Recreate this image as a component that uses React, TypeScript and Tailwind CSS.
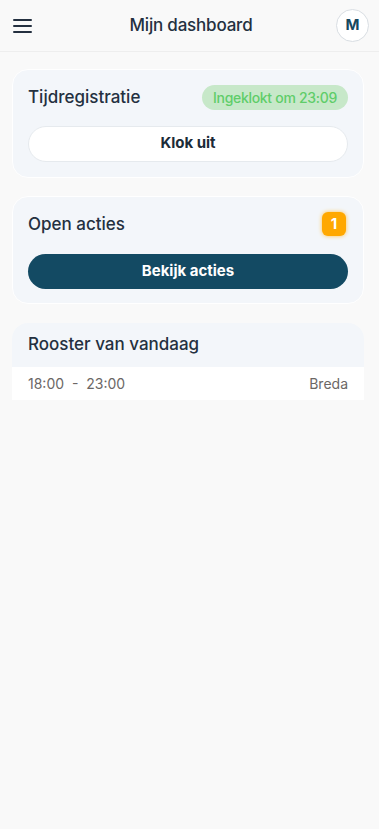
export default function App() {
  return (
    <main className="min-h-screen bg-[#f9f9f9] font-['Inter',sans-serif] text-[#243040]">
      <header className="grid h-[52px] grid-cols-[1fr_auto_1fr] items-center border-b border-[#eeeeee] bg-[#f9f9f9] pl-[13px] pr-[10px]">
        <svg width="20" height="16" viewBox="0 0 20 16" className="text-[#243040]">
          <rect x="0" y="1" width="19" height="2" rx="1" fill="currentColor" />
          <rect x="0" y="7" width="19" height="2" rx="1" fill="currentColor" />
          <rect x="0" y="13" width="19" height="2" rx="1" fill="currentColor" />
        </svg>
        <h1 className="text-[17px] font-medium tracking-[-0.2px] text-[#243040]">Mijn dashboard</h1>
        <div className="flex h-[33px] w-[33px] items-center justify-center justify-self-end rounded-full border border-[#d9dee3] bg-white text-[15px] font-bold text-[#16485f]">
          M
        </div>
      </header>

      <div className="flex flex-col gap-[18px] pl-3 pr-[15px] pt-[17px]">
        <section className="rounded-2xl border border-white bg-[#f3f6fa] px-[15px] pb-[15px] pt-[15px]">
          <div className="flex items-center justify-between">
            <h2 className="text-[17px] font-medium text-[#243040]">Tijdregistratie</h2>
            <span className="flex h-[25px] items-center rounded-full bg-[#c7e8c9] px-[11px] text-[14px] font-medium tracking-[-0.3px] text-[#5fcd69]">
              Ingeklokt om 23:09
            </span>
          </div>
          <button className="mt-[15px] h-[36px] w-full rounded-full border border-[#e6eaee] bg-white text-[15px] font-bold text-[#1b2b37]">
            Klok uit
          </button>
        </section>

        <section className="rounded-2xl border border-white bg-[#f3f6fa] px-[15px] pb-[14px] pt-[15px]">
          <div className="flex items-center justify-between">
            <h2 className="text-[17px] font-medium text-[#243040]">Open acties</h2>
            <span className="mr-[2px] flex h-[24px] w-[24px] items-center justify-center rounded-md bg-[#ffa800] text-[15px] font-bold text-white shadow-[0_0_4px_#ffc24d]">
              1
            </span>
          </div>
          <button className="mt-[17px] h-[35px] w-full rounded-full bg-[#134a63] text-[15px] font-bold text-white">
            Bekijk acties
          </button>
        </section>

        <section className="mt-[1px] overflow-hidden rounded-t-2xl">
          <div className="flex h-[44px] items-center bg-[#f3f6fa] px-4">
            <h2 className="text-[17px] font-medium text-[#243040]">Rooster van vandaag</h2>
          </div>
          <div className="flex h-[33px] items-center justify-between bg-white px-4 text-[14px] text-[#6b6766]">
            <span>18:00&nbsp; - &nbsp;23:00</span>
            <span>Breda</span>
          </div>
        </section>
      </div>
    </main>
  );
}
